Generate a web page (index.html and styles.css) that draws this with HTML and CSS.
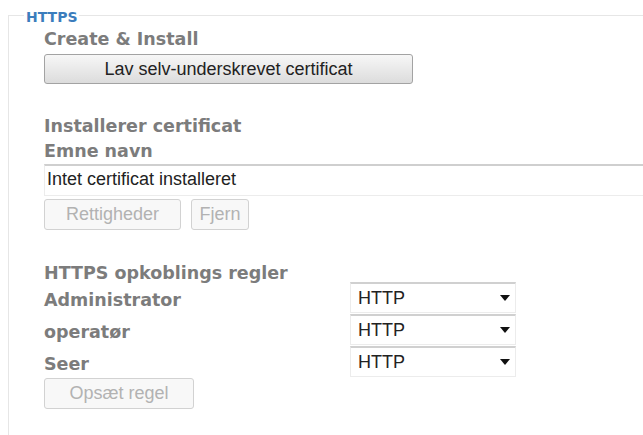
FILE: index.html
```html
<!DOCTYPE html>
<html>
<head>
<meta charset="utf-8">
<link rel="stylesheet" href="styles.css">
</head>
<body>
<fieldset class="panel">
  <legend class="panel-title">HTTPS</legend>
  <h3 class="head head-first">Create &amp; Install</h3>
  <button class="btn btn-main">Lav selv-underskrevet certificat</button>

  <h3 class="head head-section">Installerer certificat</h3>
  <h3 class="head">Emne navn</h3>
  <div class="cert-box">Intet certificat installeret</div>
  <div class="btn-row">
    <button class="btn btn-off btn-rights" disabled>Rettigheder</button>
    <button class="btn btn-off btn-remove" disabled>Fjern</button>
  </div>

  <h3 class="head head-section2">HTTPS opkoblings regler</h3>
  <div class="rules">
    <span class="head rule-label">Administrator</span>
    <div class="sel"><span>HTTP</span><i class="caret"></i></div>
    <span class="head rule-label">operatør</span>
    <div class="sel"><span>HTTP</span><i class="caret"></i></div>
    <span class="head rule-label">Seer</span>
    <div class="sel"><span>HTTP</span><i class="caret"></i></div>
  </div>
  <button class="btn btn-off btn-rule" disabled>Opsæt regel</button>
</fieldset>
</body>
</html>
```

FILE: styles.css
```css
html, body {
  margin: 0;
  padding: 0;
  background: #fff;
}
body {
  width: 643px;
  height: 435px;
  overflow: hidden;
  font-family: "Liberation Sans", Arial, sans-serif;
}
.panel {
  margin: 8px 0 0 8px;
  padding: 0 0 40px 35px;
  width: 660px;
  min-height: 460px;
  border: 1px solid #e6e6e6;
  border-right: none;
  box-sizing: border-box;
  display: block;
}
.panel-title {
  margin-left: -20px;
  padding: 4px 2px 0;
  font-family: "DejaVu Sans", Verdana, sans-serif;
  font-weight: bold;
  font-size: 14px;
  color: #3b7dbd;
  line-height: 10px;
}
.head {
  margin: 0;
  display: block;
  font-family: "DejaVu Sans", Verdana, sans-serif;
  font-weight: bold;
  font-size: 17.5px;
  line-height: 25px;
  color: #7c7c7c;
}
.head-first {
  margin-top: 5px;
}
.head-section {
  margin-top: 30px;
}
.head-section2 {
  margin-top: 31px;
}
.btn {
  display: block;
  box-sizing: border-box;
  font-family: "Liberation Sans", Arial, sans-serif;
  font-size: 18px;
  border-radius: 3px;
}
.btn-main {
  margin-top: 2px;
  width: 369px;
  height: 30px;
  border: 1px solid #a3a3a3;
  background: linear-gradient(#f7f7f7, #dcdcdc);
  color: #222;
}
.cert-box {
  margin-top: 0;
  height: 32px;
  box-sizing: border-box;
  border-top: 2px solid #cfcfcf;
  border-left: 1px solid #ececec;
  border-bottom: 1px solid #ececec;
  padding: 3px 0 0 2px;
  font-size: 18px;
  line-height: 21px;
  color: #222;
}
.btn-row {
  display: flex;
  gap: 10px;
  margin-top: 3px;
}
.btn-off {
  height: 31px;
  border: 1px solid #d2d2d2;
  background: #f8f8f8;
  color: #b2b2b2;
  padding: 0;
}
.btn-rights { width: 137px; }
.btn-remove { width: 58px; }
.rules {
  display: grid;
  grid-template-columns: 306px 166px;
  align-items: center;
  row-gap: 1px;
  margin-top: -4px;
}
.rule-label {
  padding-top: 5px;
}
.sel {
  height: 31px;
  box-sizing: border-box;
  border: 1px solid #ececec;
  border-top: 2px solid #d0d0d0;
  display: flex;
  align-items: center;
  justify-content: space-between;
  padding: 0 5px 0 7px;
  font-size: 18px;
  color: #222;
}
.caret {
  width: 0;
  height: 0;
  border-left: 5px solid transparent;
  border-right: 5px solid transparent;
  border-top: 6px solid #111;
}
.btn-rule {
  margin-top: 1px;
  width: 150px;
}
```
